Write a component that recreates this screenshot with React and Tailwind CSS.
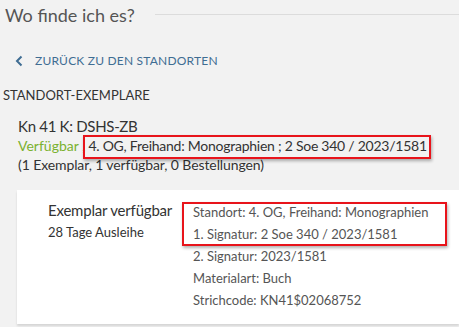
import React from "react";

export default function App() {
  const font = { fontFamily: "Lato, 'Noto Sans', sans-serif" };
  return (
    <div className="relative w-[459px] h-[327px] overflow-hidden bg-[#f2f2f2] text-[#333]" style={font}>
      <div className="flex items-center gap-[20px] pl-[5px] pt-[2px]">
        <h2 className="text-[18px] leading-[26px] text-[#555] whitespace-nowrap">Wo finde ich es?</h2>
        <div className="flex-1 h-px bg-[#dcdcdc] mt-[-1px]" />
      </div>

      <div className="mt-[25px] flex items-center pl-[15px] text-[#3f6d93]">
        <svg width="9" height="12" viewBox="0 0 9 12" className="mr-[11px]">
          <path d="M6.5 1.5 L2 6 L6.5 10.5" fill="none" stroke="currentColor" strokeWidth="2" />
        </svg>
        <span className="text-[12px] leading-[16px] tracking-[0.2px] uppercase">Zurück zu den Standorten</span>
      </div>

      <div className="mt-[17px] pl-[3px] text-[13px] leading-[18px] text-[#333]">STANDORT-EXEMPLARE</div>

      <div className="mt-[13px] pl-[18px] text-[14px] leading-[19px] text-[#333]">
        <div className="text-[15px] leading-[19px] tracking-[-0.3px]">Kn 41 K: DSHS-ZB</div>
        <div className="whitespace-nowrap tracking-[-0.25px]">
          <span className="text-[#7ab12f] tracking-normal">Verfügbar</span> , 4. OG, Freihand: Monographien ; 2 Soe 340 / 2023/1581
        </div>
        <div className="tracking-[-0.1px]">(1 Exemplar, 1 verfügbar, 0 Bestellungen)</div>
      </div>

      <div className="mt-[16px] ml-[17px] h-[134px] bg-white shadow-[0_2px_2px_rgba(0,0,0,0.12)] flex">
        <div className="w-[176px] pl-[31px] pt-[10px] shrink-0">
          <div className="text-[15px] leading-[21px] tracking-[-0.2px] text-[#333] whitespace-nowrap">Exemplar verfügbar</div>
          <div className="text-[13px] leading-[18px] text-[#333] mt-[2px]">28 Tage Ausleihe</div>
        </div>
        <div className="pt-[11px] text-[13px] leading-[22px] text-[#555] whitespace-nowrap">
          <div>Standort: 4. OG, Freihand: Monographien</div>
          <div>1. Signatur: 2 Soe 340 / 2023/1581</div>
          <div>2. Signatur: 2023/1581</div>
          <div>Materialart: Buch</div>
          <div>Strichcode: KN41$02068752</div>
        </div>
      </div>

      <div className="absolute left-[83px] top-[135px] w-[348px] h-[24px] border-2 border-[#e8141b] shadow-[1px_2px_3px_rgba(0,0,0,0.3)]" />
      <div className="absolute left-[182px] top-[202px] w-[265px] h-[44px] border-2 border-[#e8141b] shadow-[1px_2px_3px_rgba(0,0,0,0.3)]" />
    </div>
  );
}
